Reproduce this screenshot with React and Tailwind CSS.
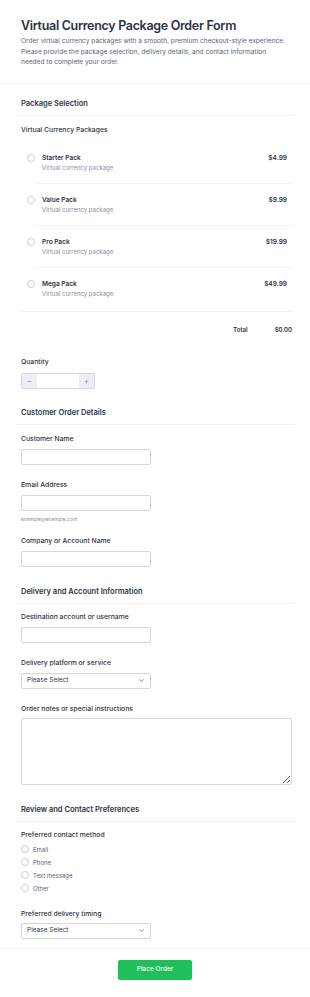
import { ChevronDown } from 'lucide-react'

const packages = [
  { name: 'Starter Pack', price: '$4.99' },
  { name: 'Value Pack', price: '$9.99' },
  { name: 'Pro Pack', price: '$19.99' },
  { name: 'Mega Pack', price: '$49.99' }
]

const contactMethods = ['Email', 'Phone', 'Text message', 'Other']

const SectionHeading = ({ children, className = '' }) => (
  <div className={`border-b border-[#eef0f4] pb-[5px] ${className}`}>
    <h2 className="px-[6px] text-[7.5px] leading-[12px] font-semibold text-[#2c3345]">{children}</h2>
  </div>
)

const Label = ({ children, className = '' }) => (
  <div className={`text-[6.8px] leading-[10px] font-medium text-[#2c3345] ${className}`}>{children}</div>
)

const TextInput = ({ className = '' }) => (
  <input
    type="text"
    className={`block w-[130px] h-[16px] rounded-[2px] border border-[#d3d6df] bg-white ${className}`}
  />
)

const SelectBox = ({ className = '' }) => (
  <div
    className={`flex w-[130px] h-[16px] items-center justify-between rounded-[2px] border border-[#d3d6df] bg-white pl-[5px] pr-[5px] ${className}`}
  >
    <span className="text-[6.5px] text-[#2c3345]">Please Select</span>
    <ChevronDown className="h-[7px] w-[7px] text-[#57647e]" strokeWidth={2.5} />
  </div>
)

const Radio = () => (
  <span className="block h-[8px] w-[8px] shrink-0 rounded-full border border-[#c9ccd6] bg-white" />
)

const App = () => {
  return (
    <div className="min-h-screen bg-white font-['Inter',sans-serif]">
      {/* Header */}
      <header className="border-b border-[#eceef3] px-[21px] pt-[16px] pb-[15px]">
        <h1 className="text-[12.5px] leading-[20px] font-semibold tracking-[-0.025em] text-[#2c3345] whitespace-nowrap">
          Virtual Currency Package Order Form
        </h1>
        <p className="text-[6.6px] leading-[10.5px] text-[#57647e]">
          Order virtual currency packages with a smooth, premium checkout-style experience.
          Please provide the package selection, delivery details, and contact information
          needed to complete your order.
        </p>
      </header>

      <div className="px-[15px]">
        {/* Package Selection */}
        <SectionHeading className="mt-[14px]">Package Selection</SectionHeading>
        <div className="pl-[6px] pr-[3px]">
          <Label className="mt-[9px]">Virtual Currency Packages</Label>
          <div className="mt-[7px]">
            {packages.map((pack, index) => (
              <div key={index}>
                <div className={`flex pt-[11px] ${index === packages.length - 1 ? 'pb-[12px]' : 'pb-[10px]'}`}>
                  <div className="w-[21px] pl-[6px] pt-[1px]">
                    <Radio />
                  </div>
                  <div className="flex-1">
                    <div className="text-[6.5px] leading-[10px] font-semibold text-[#2c3345]">{pack.name}</div>
                    <div className="text-[6px] leading-[10px] text-[#8a8fa0]">Virtual currency package</div>
                  </div>
                  <div className="pr-[5px] text-[6.5px] leading-[10px] font-semibold text-[#2c3345]">{pack.price}</div>
                </div>
                {index < packages.length - 1 && <div className="ml-[14px] h-px bg-[#f1f2f5]" />}
              </div>
            ))}
          </div>
          <div className="h-px bg-[#eceef3]" />
          <div className="mt-[13px] flex justify-end gap-[27px] text-[6px] leading-[10px] font-semibold text-[#2c3345]">
            <span>Total</span>
            <span>$0.00</span>
          </div>

          <Label className="mt-[22px]">Quantity</Label>
          <div className="mt-[6px] flex h-[16px] w-[74px] overflow-hidden rounded-[2px] border border-[#d3d6df]">
            <div className="flex w-[15px] items-center justify-center bg-[#eceef3] text-[8px] text-[#8a8fa0]">−</div>
            <div className="flex-1 bg-white" />
            <div className="flex w-[15px] items-center justify-center bg-[#eceef3] text-[8px] text-[#8a8fa0]">+</div>
          </div>
        </div>

        {/* Customer Order Details */}
        <SectionHeading className="mt-[18px]">Customer Order Details</SectionHeading>
        <div className="pl-[6px] pr-[3px]">
          <Label className="mt-[9px]">Customer Name</Label>
          <TextInput className="mt-[5px]" />
          <Label className="mt-[15px]">Email Address</Label>
          <TextInput className="mt-[5px]" />
          <div className="mt-[4px] text-[5px] leading-[8px] text-[#8a8fa0]">example@example.com</div>
          <Label className="mt-[13px]">Company or Account Name</Label>
          <TextInput className="mt-[5px]" />
        </div>

        {/* Delivery and Account Information */}
        <SectionHeading className="mt-[19px]">Delivery and Account Information</SectionHeading>
        <div className="pl-[6px] pr-[3px]">
          <Label className="mt-[8px]">Destination account or username</Label>
          <TextInput className="mt-[5px]" />
          <Label className="mt-[15px]">Delivery platform or service</Label>
          <SelectBox className="mt-[5px]" />
          <Label className="mt-[15px]">Order notes or special instructions</Label>
          <textarea className="mt-[4px] block h-[67px] w-full rounded-[2px] border border-[#d3d6df] bg-white" />
        </div>

        {/* Review and Contact Preferences */}
        <SectionHeading className="mt-[19px]">Review and Contact Preferences</SectionHeading>
        <div className="pl-[6px] pr-[3px]">
          <Label className="mt-[8px]">Preferred contact method</Label>
          <div className="mt-[3px]">
            {contactMethods.map((method, index) => (
              <div key={index} className="flex h-[13px] items-center gap-[4px]">
                <Radio />
                <span className="text-[6px] text-[#57647e]">{method}</span>
              </div>
            ))}
          </div>
          <Label className="mt-[14px]">Preferred delivery timing</Label>
          <SelectBox className="mt-[4px]" />
        </div>
      </div>

      {/* Submit */}
      <div className="mt-[9px] border-t border-[#eceef3] pt-[11px] pb-[16px] flex justify-center">
        <button className="h-[20px] w-[74px] rounded-[2px] bg-[#1fbf5b] text-[6.5px] font-medium text-white">
          Place Order
        </button>
      </div>
    </div>
  )
}

export default App
